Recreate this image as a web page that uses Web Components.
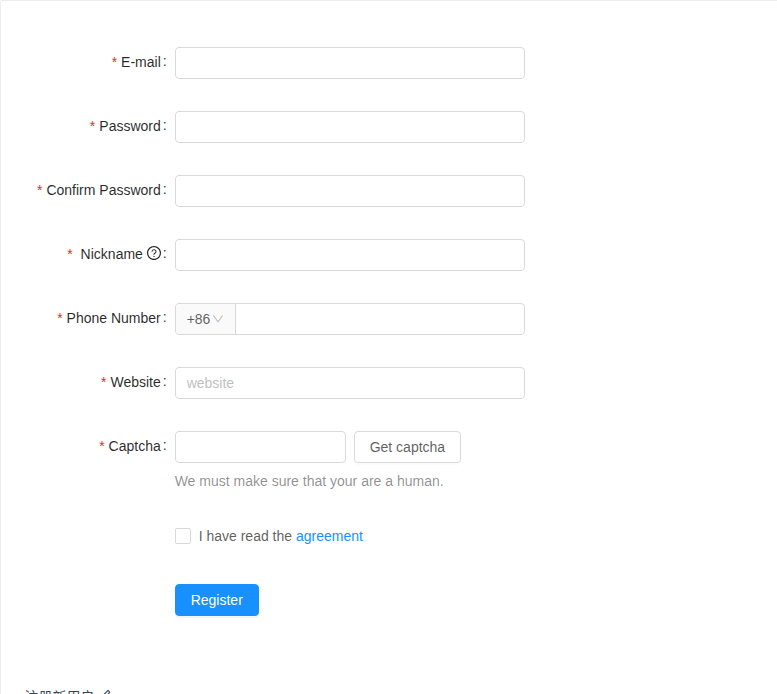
<!DOCTYPE html>
<html lang="en">
<head>
<meta charset="utf-8">
<title>Register</title>
<style>
  html, body { height: 100%; }
  body {
    margin: 0;
    overflow: hidden;
    background: #fff;
    color: rgba(0, 0, 0, .65);
    font: 14px/1.5 "Liberation Sans", "Noto Sans CJK SC", sans-serif;
  }
</style>
</head>
<body>
<demo-box>
  <register-form></register-form>
  <span slot="title">注册新用户</span>
</demo-box>

<script>
const icons = {
  question: 'M512 64C264.6 64 64 264.6 64 512s200.6 448 448 448 448-200.6 448-448S759.4 64 512 64zm0 820c-205.4 0-372-166.6-372-372s166.6-372 372-372 372 166.6 372 372-166.6 372-372 372zM623.6 316.7C593.6 290.4 554 276 512 276s-81.6 14.5-111.6 40.7C369.2 344 352 380.7 352 420v7.6c0 4.4 3.6 8 8 8h48c4.4 0 8-3.6 8-8V420c0-44.1 43.1-80 96-80s96 35.9 96 80c0 31.1-22 59.6-56.1 72.7-21.2 8.1-39.2 22.3-52.1 40.9-13.1 19-19.9 41.8-19.9 64.9V620c0 4.4 3.6 8 8 8h48c4.4 0 8-3.6 8-8v-22.7a48.3 48.3 0 0 1 30.9-44.8c59-22.7 97.1-74.7 97.1-132.5.1-39.3-17.1-76-48.3-103.3zM472 732a40 40 0 1 0 80 0 40 40 0 1 0-80 0z',
  down: 'M884 256h-75c-5.1 0-9.9 2.5-12.9 6.6L512 654.2 227.9 262.6c-3-4.1-7.8-6.6-12.9-6.6h-75c-6.5 0-10.3 7.4-6.5 12.7l352.6 486.1c12.8 17.6 39 17.6 51.7 0l352.6-486.1c3.9-5.3.1-12.7-6.4-12.7z',
  edit: 'M257.7 752c2 0 4-.2 6-.5L431.9 722c2-.4 3.9-1.3 5.3-2.8l423.9-423.9a9.96 9.96 0 0 0 0-14.1L694.9 114.9c-1.9-1.9-4.4-2.9-7.1-2.9s-5.2 1-7.1 2.9L256.8 538.8c-1.5 1.5-2.4 3.3-2.8 5.3l-29.5 168.2a33.5 33.5 0 0 0 9.4 29.8c6.6 6.4 14.9 9.9 23.8 9.9zm67.4-174.4L687.8 215l73.3 73.3-362.7 362.6-88.9 15.7 15.6-89zM880 836H144c-17.7 0-32 14.3-32 32v36c0 4.4 3.6 8 8 8h784c4.4 0 8-3.6 8-8v-36c0-17.7-14.3-32-32-32z'
};

customElements.define('ui-icon', class extends HTMLElement {
  connectedCallback() {
    this.attachShadow({mode: 'open'}).innerHTML = `
      <style>
        :host { display: inline-block; line-height: 0; vertical-align: -0.125em; }
        svg { width: 1em; height: 1em; fill: currentColor; }
      </style>
      <svg viewBox="64 64 896 896"><path d="${icons[this.getAttribute('type')]}"/></svg>
    `;
  }
});

customElements.define('ui-input', class extends HTMLElement {
  connectedCallback() {
    this.attachShadow({mode: 'open'}).innerHTML = `
      <style>
        :host {
          display: flex;
          box-sizing: border-box;
          height: 32px;
          border: 1px solid #d9d9d9;
          border-radius: 4px;
          background: #fff;
          overflow: hidden;
        }
        input {
          flex: 1;
          min-width: 0;
          margin: 0;
          padding: 4px 11px;
          border: 0;
          outline: 0;
          background: none;
          color: inherit;
          font: inherit;
          line-height: 21px;
        }
        input::placeholder { color: #bfbfbf; }
      </style>
      <slot></slot>
      <input type="${this.getAttribute('type') || 'text'}" placeholder="${this.getAttribute('placeholder') || ''}">
    `;
  }
});

// prefix selector, sits inside of ui-input
customElements.define('ui-select', class extends HTMLElement {
  connectedCallback() {
    this.attachShadow({mode: 'open'}).innerHTML = `
      <style>
        :host {
          display: flex;
          align-items: center;
          box-sizing: border-box;
          width: 60px;
          padding-left: 11px;
          border-right: 1px solid #d9d9d9;
          background: #fafafa;
          line-height: 30px;
        }
        ui-icon { margin-left: 1.6px; font-size: 12px; color: rgba(0, 0, 0, .25); }
      </style>
      <slot></slot><ui-icon type="down"></ui-icon>
    `;
  }
});

customElements.define('ui-button', class extends HTMLElement {
  connectedCallback() {
    this.attachShadow({mode: 'open'}).innerHTML = `
      <style>
        :host { display: inline-flex; }
        button {
          height: 32px;
          margin: 0;
          padding: 0 15px;
          border: 1px solid #d9d9d9;
          border-radius: 4px;
          background: #fff;
          box-shadow: 0 2px 0 rgba(0, 0, 0, .015);
          color: rgba(0, 0, 0, .65);
          font: inherit;
          white-space: nowrap;
        }
        :host([primary]) button {
          border-color: #1890ff;
          background: #1890ff;
          box-shadow: 0 2px 0 rgba(0, 0, 0, .045);
          color: #fff;
        }
      </style>
      <button type="button"><slot></slot></button>
    `;
  }
});

customElements.define('ui-checkbox', class extends HTMLElement {
  connectedCallback() {
    this.attachShadow({mode: 'open'}).innerHTML = `
      <style>
        :host { display: flex; align-items: center; height: 32px; }
        .box {
          box-sizing: border-box;
          width: 16px;
          height: 16px;
          margin-right: 8px;
          border: 1px solid #d9d9d9;
          border-radius: 2px;
        }
      </style>
      <span class="box"></span><span><slot></slot></span>
    `;
  }
});

customElements.define('form-item', class extends HTMLElement {
  connectedCallback() {
    const label = this.getAttribute('label');
    this.attachShadow({mode: 'open'}).innerHTML = `
      <style>
        :host { display: grid; grid-template-columns: 149.66px 350px; }
        .label {
          height: 32px;
          line-height: 30px;
          text-align: right;
          white-space: nowrap;
          color: rgba(0, 0, 0, .85);
        }
        .star { margin-right: 4px; color: #f5222d; }
        .colon { position: relative; top: -1px; margin: 0 8px 0 2px; }
        .extra { padding-top: 8px; line-height: 21px; color: rgba(0, 0, 0, .45); }
      </style>
      <div class="label">${label ? `<span class="star">*</span><slot name="label">${label}</slot><span class="colon">:</span>` : ''}</div>
      <div>
        <slot></slot>
        ${this.hasAttribute('extra') ? `<div class="extra">${this.getAttribute('extra')}</div>` : ''}
      </div>
    `;
  }
});

customElements.define('register-form', class extends HTMLElement {
  connectedCallback() {
    this.attachShadow({mode: 'open'}).innerHTML = `
      <style>
        :host { display: flex; flex-direction: column; gap: 32px; }
        a { color: #1890ff; text-decoration: none; }
        .captcha { display: flex; gap: 8px; }
        .captcha ui-input { width: 171px; }
        .agreement { margin-top: -4px; }
        [slot=label] ui-icon { vertical-align: -1px; }
      </style>
      <form-item label="E-mail"><ui-input></ui-input></form-item>
      <form-item label="Password"><ui-input type="password"></ui-input></form-item>
      <form-item label="Confirm Password"><ui-input type="password"></ui-input></form-item>
      <form-item label="Nickname">
        <span slot="label">&nbsp;Nickname&nbsp;<ui-icon type="question"></ui-icon></span>
        <ui-input></ui-input>
      </form-item>
      <form-item label="Phone Number">
        <ui-input><ui-select>+86</ui-select></ui-input>
      </form-item>
      <form-item label="Website"><ui-input placeholder="website"></ui-input></form-item>
      <form-item label="Captcha" extra="We must make sure that your are a human.">
        <div class="captcha">
          <ui-input></ui-input>
          <ui-button>Get captcha</ui-button>
        </div>
      </form-item>
      <form-item class="agreement">
        <ui-checkbox>I have read the <a href="#">agreement</a></ui-checkbox>
      </form-item>
      <form-item><ui-button primary>Register</ui-button></form-item>
    `;
  }
});

customElements.define('demo-box', class extends HTMLElement {
  connectedCallback() {
    this.attachShadow({mode: 'open'}).innerHTML = `
      <style>
        :host {
          display: block;
          box-sizing: border-box;
          width: 800px;
          height: 694px;
          border: 1px solid #ebedf0;
          border-bottom: 0;
          border-radius: 2px 2px 0 0;
          overflow: hidden;
        }
        .demo { padding: 46px 24px 69px; }
        .title {
          display: flex;
          align-items: flex-start;
          padding: 0 23.5px;
          color: #314659;
          line-height: 24px;
        }
        ui-icon { margin: 4px 0 0 4px; font-size: 13px; }
      </style>
      <div class="demo"><slot></slot></div>
      <div class="title"><slot name="title"></slot><ui-icon type="edit"></ui-icon></div>
    `;
  }
});
</script>
</body>
</html>
